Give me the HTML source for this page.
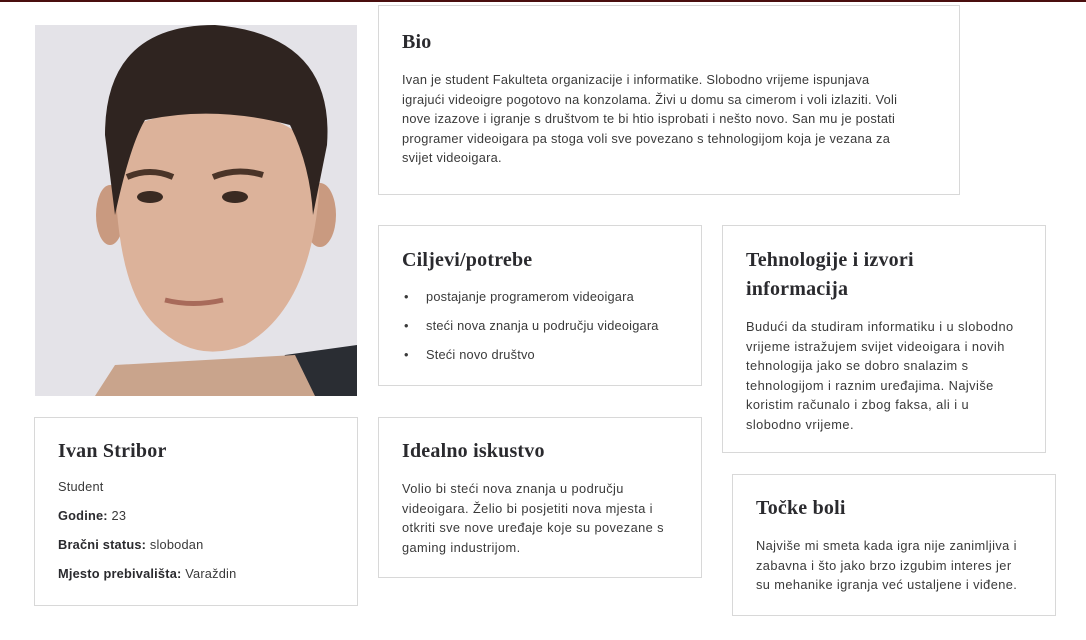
<!DOCTYPE html>
<html><head><meta charset="utf-8"><style>
body{margin:0;width:1086px;height:640px;background:#fff;position:relative;overflow:hidden;font-family:"Liberation Sans",sans-serif;color:#3a3a3a}
.top{position:absolute;left:0;top:0;width:1086px;height:2px;background:#4a0e0e}
.card{position:absolute;border:1px solid #d8d8d8;box-sizing:border-box;background:#fff}
h2{font-family:"Liberation Serif",serif;font-weight:bold;font-size:20px;color:#2a2a2e;margin:0;line-height:29px;letter-spacing:0.2px}
p{margin:0;font-size:12.8px;line-height:19.5px;white-space:nowrap;letter-spacing:0.25px}
ul{margin:0;padding:0;list-style:none;font-size:12.8px;letter-spacing:0.2px}
li{position:relative;padding-left:24px;height:29px}
ul.b li:before{content:"•";position:absolute;left:2px}
.info li{padding:0}
b{color:#2a2a2e}
</style></head><body>
<div class="top"></div>
<svg style="position:absolute;left:35px;top:25px" width="322" height="371" viewBox="0 0 322 371">
<rect width="322" height="371" fill="#e4e3e8"/>
<path d="M250 330 L322 320 L322 371 L220 371Z" fill="#2a2d33"/>
<path d="M80 340 L60 371 L280 371 L260 330Z" fill="#c9a48c"/>
<ellipse cx="75" cy="190" rx="14" ry="30" fill="#c99a80"/>
<ellipse cx="285" cy="190" rx="16" ry="32" fill="#c99a80"/>
<path d="M80 120 Q78 260 120 300 Q160 340 210 320 Q280 280 285 150 Q280 90 180 85 Q90 90 80 120Z" fill="#dcb29a"/>
<path d="M180 0 Q70 0 70 110 L80 190 Q95 120 110 95 Q180 80 255 100 Q275 140 278 190 L292 120 Q300 10 180 0Z" fill="#2f2420"/>
<ellipse cx="115" cy="172" rx="13" ry="6" fill="#3a2a22"/>
<ellipse cx="200" cy="172" rx="13" ry="6" fill="#3a2a22"/>
<path d="M92 152 Q115 142 138 152" stroke="#4a3428" stroke-width="6" fill="none"/>
<path d="M178 152 Q202 142 228 150" stroke="#4a3428" stroke-width="6" fill="none"/>
<path d="M130 275 Q158 282 188 275" stroke="#a86a5a" stroke-width="5" fill="none"/>
</svg>
<div class="card" style="left:378px;top:5px;width:582px;height:190px;padding:22px 23px">
<h2>Bio</h2>
<p style="margin-top:13px">Ivan je student Fakulteta organizacije i informatike. Slobodno vrijeme ispunjava<br>igrajući videoigre pogotovo na konzolama. Živi u domu sa cimerom i voli izlaziti. Voli<br>nove izazove i igranje s društvom te bi htio isprobati i nešto novo. San mu je postati<br>programer videoigara pa stoga voli sve povezano s tehnologijom koja je vezana za<br>svijet videoigara.</p>
</div>
<div class="card" style="left:378px;top:225px;width:324px;height:161px;padding:20px 23px">
<h2>Ciljevi/potrebe</h2>
<ul class="b" style="margin-top:14px"><li>postajanje programerom videoigara</li><li>steći nova znanja u području videoigara</li><li>Steći novo društvo</li></ul>
</div>
<div class="card" style="left:722px;top:225px;width:324px;height:228px;padding:20px 23px">
<h2>Tehnologije i izvori<br>informacija</h2>
<p style="margin-top:13px;letter-spacing:0.45px">Budući da studiram informatiku i u slobodno<br>vrijeme istražujem svijet videoigara i novih<br>tehnologija jako se dobro snalazim s<br>tehnologijom i raznim uređajima. Najviše<br>koristim računalo i zbog faksa, ali i u<br>slobodno vrijeme.</p>
</div>
<div class="card" style="left:34px;top:417px;width:324px;height:189px;padding:19px 23px">
<h2>Ivan Stribor</h2>
<ul class="info" style="margin-top:14px;line-height:14px"><li>Student</li><li><b>Godine:</b> 23</li><li><b>Bračni status:</b> slobodan</li><li><b>Mjesto prebivališta:</b> Varaždin</li></ul>
</div>
<div class="card" style="left:378px;top:417px;width:324px;height:161px;padding:19px 23px">
<h2>Idealno iskustvo</h2>
<p style="margin-top:13px;letter-spacing:0.4px">Volio bi steći nova znanja u području<br>videoigara. Želio bi posjetiti nova mjesta i<br>otkriti sve nove uređaje koje su povezane s<br>gaming industrijom.</p>
</div>
<div class="card" style="left:732px;top:474px;width:324px;height:142px;padding:19px 23px">
<h2>Točke boli</h2>
<p style="margin-top:13px;letter-spacing:0.4px">Najviše mi smeta kada igra nije zanimljiva i<br>zabavna i što jako brzo izgubim interes jer<br>su mehanike igranja već ustaljene i viđene.</p>
</div>
</body></html>
